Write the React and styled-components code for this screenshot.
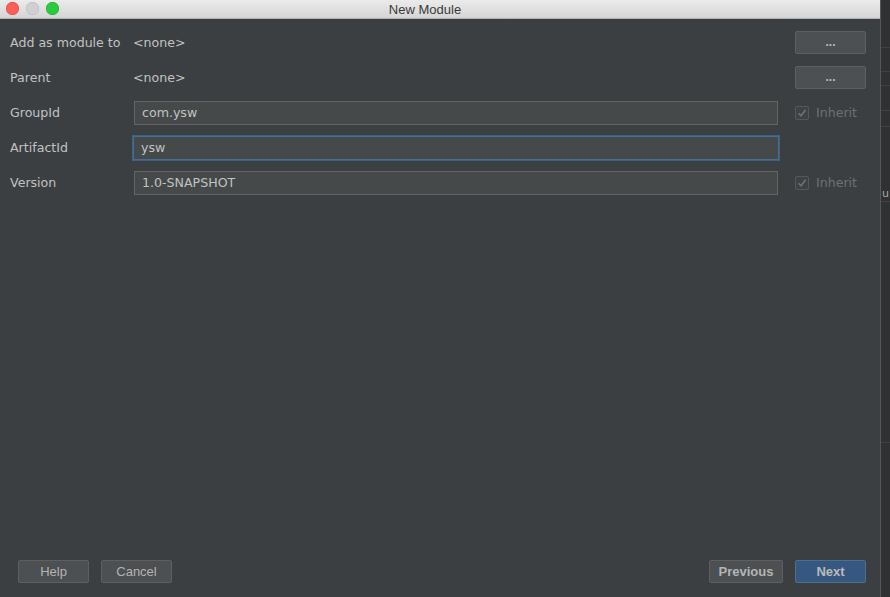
import React from 'react'
import styled, { createGlobalStyle } from 'styled-components'

const GlobalStyle = createGlobalStyle`
  html, body {
    margin: 0;
    padding: 0;
    background: #2b2d2f;
  }
  body {
    font-family: "DejaVu Sans", "Liberation Sans", sans-serif;
  }
`

const rows = [
  { label: 'Add as module to', kind: 'text', value: '<none>', browse: true },
  { label: 'Parent', kind: 'text', value: '<none>', browse: true },
  { label: 'GroupId', kind: 'input', value: 'com.ysw', inherit: true },
  { label: 'ArtifactId', kind: 'input', value: 'ysw', focused: true },
  { label: 'Version', kind: 'input', value: '1.0-SNAPSHOT', inherit: true }
]

const CheckIcon = () => (
  <svg width="10" height="10" viewBox="0 0 10 10">
    <path d="M1.5 5.2 L4 7.8 L8.6 1.8" fill="none" stroke="#6f7172" strokeWidth="1.6" />
  </svg>
)

const App = () => (
  <Screen>
    <GlobalStyle />
    <Dialog>
      <TitleBar>
        <Lights>
          <Light color="#fc5f57" edge="#de4640" />
          <Light color="#d0d0d0" edge="#b7b7b7" />
          <Light color="#2acb41" edge="#1ea831" />
        </Lights>
        <Title>New Module</Title>
      </TitleBar>
      <Body>
        <Form>
          {
            rows.map((row) => (
              <Row key={row.label}>
                <Label>{row.label}</Label>
                {
                  row.kind === 'text'
                    ? <Value>{row.value}</Value>
                    : <Input focused={row.focused}>{row.value}</Input>
                }
                <Side>
                  {row.browse && <SmallButton>...</SmallButton>}
                  {row.inherit && (
                    <Inherit>
                      <Box><CheckIcon /></Box>
                      Inherit
                    </Inherit>
                  )}
                </Side>
              </Row>
            ))
          }
        </Form>
        <Footer>
          <Group>
            <Button>Help</Button>
            <Button>Cancel</Button>
          </Group>
          <Group>
            <Button bold wide>Previous</Button>
            <Button bold primary>Next</Button>
          </Group>
        </Footer>
      </Body>
    </Dialog>
    <Behind>
      <Slot h={47} />
      <Slot h={23} line />
      <Slot h={13} line />
      <Slot h={24} line />
      <Slot h={15} line />
      <Slot h={60} line />
      <Letter>u</Letter>
      <Slot h={240} line />
      <Slot h={145} line />
    </Behind>
  </Screen>
)

export default App

const Screen = styled.div`
  width: 890px;
  height: 597px;
  display: flex;
  overflow: hidden;
`

const Dialog = styled.div`
  width: 881px;
  flex: 0 0 auto;
  display: flex;
  flex-direction: column;
  background: #3c3f41;
  border-right: 1px solid #55585a;
  box-sizing: border-box;
`

const TitleBar = styled.div`
  height: 18px;
  flex: 0 0 auto;
  position: relative;
  display: flex;
  align-items: center;
  justify-content: center;
  padding-right: 30px;
  background: linear-gradient(#ebebeb, #d5d5d5);
  border-bottom: 1px solid #b1b1b1;
`

const Lights = styled.div`
  position: absolute;
  left: 6px;
  top: 2px;
  display: flex;
  gap: 7px;
`

const Light = styled.span`
  width: 13px;
  height: 13px;
  border-radius: 50%;
  background: ${(p) => p.color};
  box-shadow: inset 0 0 0 0.5px ${(p) => p.edge};
`

const Title = styled.div`
  font-family: "Liberation Sans", Arial, sans-serif;
  font-size: 13px;
  color: #3a3a3a;
`

const Body = styled.div`
  flex: 1 1 auto;
  display: flex;
  flex-direction: column;
  justify-content: space-between;
  padding: 6px 14px 14px 10px;
`

const Form = styled.div`
  display: flex;
  flex-direction: column;
`

const Row = styled.div`
  height: 35px;
  display: grid;
  grid-template-columns: 123px 646px 1fr;
  align-items: center;
`

const Label = styled.div`
  font-size: 12.6px;
  color: #c2c2c2;
  white-space: nowrap;
`

const Value = styled.div`
  font-size: 12.6px;
  color: #c2c2c2;
`

const Input = styled.div`
  height: 24px;
  box-sizing: border-box;
  display: flex;
  align-items: center;
  padding-left: 7px;
  font-size: 12.6px;
  color: #c2c2c2;
  background: #45494a;
  border: 1px solid ${(p) => (p.focused ? '#466d94' : '#646464')};
  box-shadow: ${(p) => (p.focused ? '0 0 0 1px #3d6185' : 'none')};
  margin-left: ${(p) => (p.focused ? '0' : '1px')};
  margin-right: ${(p) => (p.focused ? '0' : '1px')};
`

const Side = styled.div`
  display: flex;
  justify-content: flex-end;
  padding-left: 16px;
`

const SmallButton = styled.div`
  width: 71px;
  height: 23px;
  box-sizing: border-box;
  display: flex;
  align-items: center;
  justify-content: center;
  padding-bottom: 2px;
  font-family: "Liberation Sans", Arial, sans-serif;
  font-size: 12px;
  font-weight: bold;
  color: #bbbbbb;
  background: #4c5052;
  border: 1px solid #5e6060;
  border-radius: 2px;
`

const Inherit = styled.div`
  flex: 1 1 auto;
  display: flex;
  align-items: center;
  gap: 7px;
  font-size: 12.6px;
  color: #6e7071;
`

const Box = styled.span`
  width: 14px;
  height: 14px;
  box-sizing: border-box;
  display: flex;
  align-items: center;
  justify-content: center;
  border: 1px solid #55585a;
  border-radius: 2px;
  background: #3f4244;
`

const Footer = styled.div`
  display: flex;
  justify-content: space-between;
  padding-left: 8px;
`

const Group = styled.div`
  display: flex;
  gap: 12px;
`

const Button = styled.div`
  width: ${(p) => (p.wide ? '74px' : '71px')};
  height: 23px;
  box-sizing: border-box;
  display: flex;
  align-items: center;
  justify-content: center;
  font-family: "Liberation Sans", Arial, sans-serif;
  font-size: 13px;
  font-weight: ${(p) => (p.bold ? 'bold' : 'normal')};
  color: ${(p) => (p.primary ? '#bbbbbb' : '#b4b4b4')};
  background: ${(p) => (p.primary ? '#365880' : '#4c5052')};
  border: 1px solid ${(p) => (p.primary ? '#4c708c' : '#5e6060')};
  border-radius: 2px;
`

const Behind = styled.div`
  flex: 1 1 auto;
  display: flex;
  flex-direction: column;
  background: #2f3133;
`

const Slot = styled.div`
  height: ${(p) => p.h}px;
  flex: 0 0 auto;
  border-top: ${(p) => (p.line ? '1px solid #3e4143' : 'none')};
`

const Letter = styled.div`
  height: 14px;
  font-size: 11px;
  color: #a9a9a9;
  padding-left: 1px;
`
